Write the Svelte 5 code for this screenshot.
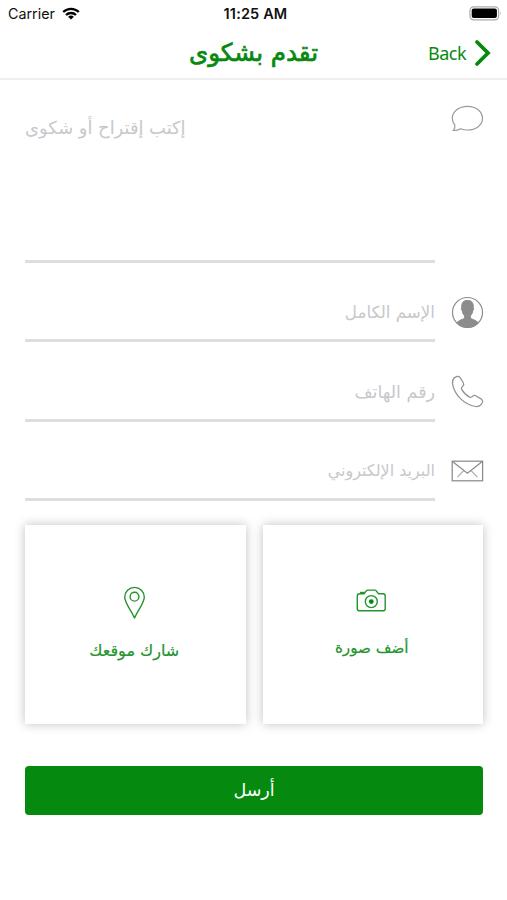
<script>
  const fields = [
    { id: 'name', label: 'الإسم الكامل' },
    { id: 'phone', label: 'رقم الهاتف' },
    { id: 'email', label: 'البريد الإلكتروني' }
  ];
</script>

<div class="screen">
  <header>
    <div class="status">
      <div class="carrier">
        <span>Carrier</span>
        <svg width="18" height="13" viewBox="0 0 18 13" fill="none" stroke="#000" stroke-width="2.3">
          <path d="M1.2 5C5.5 .7 12.5 .7 16.8 5" />
          <path d="M4 8C6.8 5.3 11.2 5.3 14 8" />
          <path d="M9 12.5 6.1 9.7Q9 7.4 11.9 9.7Z" fill="#000" stroke="none" />
        </svg>
      </div>
      <span class="time">11:25 AM</span>
      <svg class="battery" width="34" height="15" viewBox="0 0 34 15">
        <rect x="1" y=".8" width="28.6" height="13" rx="3.6" fill="#fff" stroke="#aaa" stroke-width="1.2" />
        <rect x="2.7" y="2.5" width="25.2" height="9.6" rx="2" />
        <path d="M31 5.2q1.7 2.1 0 4.2Z" fill="#aaa" />
      </svg>
    </div>
    <nav>
      <h1 dir="rtl">تقدم بشكوى</h1>
      <div class="back">
        <span>Back</span>
        <svg width="18" height="28" viewBox="0 0 18 28" fill="none" stroke="#07890f" stroke-width="3.8" stroke-linecap="round">
          <path d="m3 3 11 11L3 25" />
        </svg>
      </div>
    </nav>
  </header>

  <main>
    <div class="row message">
      <div class="line"><span class="hint" dir="rtl">إكتب إقتراح أو شكوى</span></div>
      <svg class="icon" width="33" height="28" viewBox="0 0 33 28" fill="none" stroke="#999" stroke-width="1.2">
        <path d="M2.3 25.5C4 23.5 4.3 22 3.8 20 2 18 1.3 15.8 1.3 13.3 1.3 6.5 8 1.3 16.5 1.3S31.5 6.5 31.5 13.3 25 25 16.5 25Q12.5 25 9.5 23.7 6.5 25.7 2.3 25.5Z" />
      </svg>
    </div>

    {#each fields as field (field.id)}
      <div class="row {field.id}">
        <div class="line"><span class="hint" dir="rtl">{field.label}</span></div>
        {#if field.id === 'name'}
          <svg class="icon" width="33" height="33" viewBox="0 0 33 33">
            <circle cx="16.5" cy="16.5" r="15" fill="#fff" stroke="#8c8c8c" stroke-width="1.2" />
            <path d="M5.6 26.8Q7.8 24.3 12.8 22.8C13.8 22 13.7 20.5 13.2 19.3 12 18.2 11.5 16.5 11.3 14.8 10.1 13.8 10.2 12 10.8 11.5 10.2 6.8 12.5 4.4 16.5 4.4S22.8 6.8 22.2 11.5C22.8 12 22.9 13.8 21.7 14.8 21.5 16.5 21 18.2 19.8 19.3 19.3 20.5 19.2 22 20.2 22.8Q25.2 24.3 27.4 26.8A15 15 0 0 1 5.6 26.8Z" fill="#8c8c8c" stroke="#8c8c8c" />
          </svg>
        {:else if field.id === 'phone'}
          <svg class="icon" width="33" height="33" viewBox="0 0 33 33" fill="none" stroke="#939393" stroke-width="1.25" stroke-linejoin="round">
            <path d="M3.6 2.6 6.2 1.4Q7.9 1 9 2.4L12.4 8Q13.3 9.7 11.9 11.1 9.8 12.9 10.7 14.4 13.5 19.5 18.6 22.1 20.3 22.8 21.8 21.1 23.1 19.9 24.8 20.8L30.7 24.4Q32.2 25.6 31.5 27.3L29.7 30Q27.7 31.8 24.6 31.5C13 29.5 3.5 20 1.5 8.8Q1.1 4.7 3.6 2.6Z" />
          </svg>
        {:else}
          <svg class="icon" width="33" height="23" viewBox="0 0 33 23" fill="none" stroke="#888" stroke-width="1.2">
            <rect x="1.2" y="1.2" width="30.4" height="19.6" />
            <path d="m1.5 1.5 14.9 11.7L31.3 1.5" />
            <path d="m6.5 17.2 6-6.3m7.8 0 6 6.3" stroke="#aaa" />
          </svg>
        {/if}
      </div>
    {/each}

    <div class="cards">
      <div class="card">
        <svg class="pin" width="23" height="34" viewBox="0 0 23 34" fill="none" stroke="#24932d" stroke-width="1.4" stroke-linejoin="round">
          <path d="M11.5 32C9 25.5 1.7 17 1.7 11.2a9.8 9.8 0 0 1 19.6 0C21.3 17 14 25.5 11.5 32Z" />
          <circle cx="11.5" cy="10.7" r="4.4" />
        </svg>
        <span class="location" dir="rtl">شارك موقعك</span>
      </div>
      <div class="card">
        <svg class="camera" width="31" height="24" viewBox="0 0 31 24" fill="none" stroke="#24932d" stroke-width="1.4">
          <path d="M3.5 4.8H8L10.5 1.6Q11 1.1 12 1.1H18.5Q19.5 1.1 20 1.6L22.5 4.8H27Q29.2 4.8 29.2 7V19.7Q29.2 21.8 27 21.8H3.5Q1.3 21.8 1.3 19.7V7Q1.3 4.8 3.5 4.8Z" />
          <path d="M4 3.7h4.3" stroke-width="1.8" />
          <circle cx="15.3" cy="12.6" r="6" />
          <circle cx="15.3" cy="12.6" r="2.4" fill="#07890f" stroke="none" />
        </svg>
        <span class="photo" dir="rtl">أضف صورة</span>
      </div>
    </div>

    <button dir="rtl"><span>أرسل</span></button>
  </main>
</div>

<style>
  :global(body) {
    margin: 0;
    background: #fff;
  }
  .screen {
    width: 507px;
    height: 900px;
    overflow: hidden;
    background: #fff;
    font-family: 'DejaVu Sans', sans-serif;
    color: #07890f;
  }
  header {
    height: 78px;
    border-bottom: 2px solid #efefef;
  }
  .status {
    height: 27px;
    display: grid;
    grid-template-columns: 1fr auto 1fr;
    align-items: center;
    padding: 0 4px 0 8px;
    box-sizing: border-box;
    font-family: Inter, sans-serif;
    font-size: 14.3px;
    color: #111;
  }
  .carrier {
    display: flex;
    align-items: center;
    gap: 7px;
  }
  .time {
    font-size: 14.5px;
    letter-spacing: 0.15px;
    font-weight: 600;
  }
  .battery {
    justify-self: end;
  }
  nav {
    height: 51px;
    display: grid;
    grid-template-columns: 1fr auto 1fr;
    align-items: center;
  }
  h1 {
    grid-column: 2;
    margin: 0;
    font-size: 24.5px;
    line-height: 30px;
    font-weight: 400;
    -webkit-text-stroke: 0.7px #07890f;
    white-space: nowrap;
  }
  .back {
    justify-self: end;
    display: flex;
    align-items: center;
    gap: 8px;
    padding-right: 15px;
    font-family: 'Noto Sans', sans-serif;
    font-size: 18px;
    letter-spacing: -0.5px;
  }
  main {
    padding: 0 23px 0 25px;
  }
  .row {
    height: 79.3px;
    display: flex;
    justify-content: space-between;
    box-sizing: border-box;
  }
  .message {
    height: 183px;
  }
  .line {
    width: 410px;
    border-bottom: 3px solid #dedede;
    display: flex;
    align-items: flex-end;
    box-sizing: border-box;
    padding: 0 0 15px 1px;
    direction: rtl;
  }
  .message .line {
    direction: ltr;
    align-items: flex-start;
    padding: 36px 0 0;
  }
  .icon {
    align-self: flex-end;
    margin-bottom: 13px;
  }
  .phone .icon {
    margin-bottom: 14px;
  }
  .email .icon {
    margin-bottom: 18px;
  }
  .message .icon {
    align-self: flex-start;
    margin-top: 25px;
  }
  .hint {
    display: block;
    font-size: 16.7px;
    line-height: 24px;
    color: #c8c8cc;
    white-space: nowrap;
  }
  .message .hint {
    font-size: 17.9px;
  }
  .phone .hint {
    font-size: 17.5px;
  }
  .email .hint {
    font-size: 16px;
  }
  .cards {
    display: flex;
    gap: 17px;
    margin: 24px 1px 0 0;
  }
  .card {
    flex: 1;
    height: 199px;
    display: flex;
    flex-direction: column;
    align-items: center;
    background: #fff;
    box-shadow: 0 0 10px rgba(0, 0, 0, 0.25);
    box-sizing: border-box;
    padding: 61px 2px 0 0;
    font-size: 16px;
    line-height: 24px;
    color: #24932d;
  }
  .card span {
    margin-top: 19px;
    -webkit-text-stroke: 0.2px #24932d;
  }
  .card .camera {
    margin: 3px 0 4px;
  }
  .card .photo {
    font-size: 15.2px;
  }
  button {
    display: block;
    width: 458px;
    height: 49px;
    margin-top: 42px;
    padding: 0;
    border: 0;
    border-radius: 4px;
    background: #058a0f;
    color: #fff;
    font: inherit;
    font-size: 17.5px;
  }
</style>
